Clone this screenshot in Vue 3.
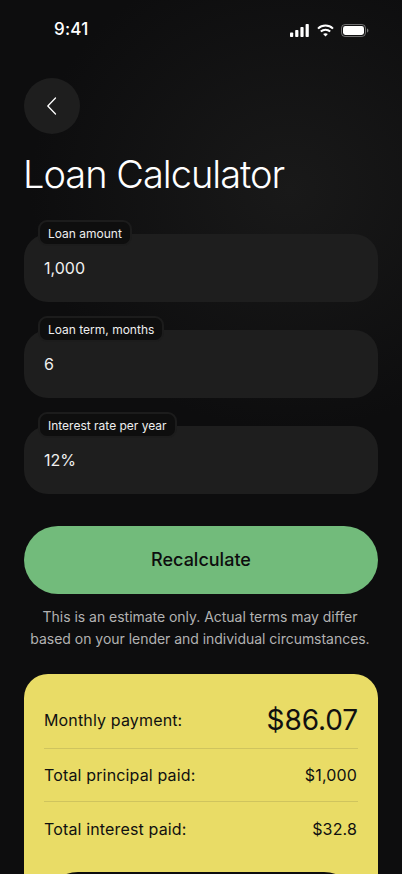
<script setup>
const fields = [
  { label: 'Loan amount', value: '1,000' },
  { label: 'Loan term, months', value: '6' },
  { label: 'Interest rate per year', value: '12%' },
]
</script>

<template>
  <div class="screen">
    <div class="status">
      <span class="time">9:41</span>
      <div class="status-icons">
        <svg width="19" height="13" viewBox="0 0 19 13" fill="#fff">
          <rect x="0" y="8.5" width="3.2" height="4.5" rx="0.8" />
          <rect x="5.2" y="6" width="3.2" height="7" rx="0.8" />
          <rect x="10.4" y="3" width="3.2" height="10" rx="0.8" />
          <rect x="15.6" y="0" width="3.2" height="13" rx="0.8" />
        </svg>
        <svg width="17" height="13" viewBox="0 0 17 13" fill="none" stroke="#fff" stroke-width="2">
          <path d="M1 4.6C5.2 .6 11.8 .6 16 4.6" />
          <path d="M3.8 7.5C6.5 5 10.5 5 13.2 7.5" />
          <path d="M8.5 12.6 6.1 10.1C7.5 9 9.5 9 10.9 10.1Z" fill="#fff" stroke="none" />
        </svg>
        <svg width="28" height="13" viewBox="0 0 28 13" fill="none">
          <rect x="0.5" y="0.5" width="24" height="12" rx="3.6" stroke="#fff" stroke-opacity="0.4" />
          <rect x="2" y="2" width="21" height="9" rx="2.4" fill="#fff" />
          <path d="M26 4.5v4c.8-.3 1.4-1.1 1.4-2s-.6-1.7-1.4-2Z" fill="#fff" fill-opacity="0.45" />
        </svg>
      </div>
    </div>

    <main class="content">
      <button class="back" aria-label="Back">
        <svg width="12" height="20" viewBox="0 0 12 20" fill="none" stroke="#fff" stroke-width="1.3" stroke-linecap="round" stroke-linejoin="round">
          <path d="M9.5 2 1.8 10 9.5 18" />
        </svg>
      </button>

      <h1 class="title">Loan Calculator</h1>

      <div class="fields">
        <div v-for="f in fields" :key="f.label" class="field">
          <span class="tag">{{ f.label }}</span>
          <span class="value">{{ f.value }}</span>
        </div>
      </div>

      <button class="recalc">Recalculate</button>

      <p class="note">This is an estimate only. Actual terms may differ<br />based on your lender and individual circumstances.</p>

      <section class="card">
        <div class="row first">
          <span>Monthly payment:</span>
          <span class="big">$86.07</span>
        </div>
        <div class="row">
          <span>Total principal paid:</span>
          <span>$1,000</span>
        </div>
        <div class="row last">
          <span>Total interest paid:</span>
          <span>$32.8</span>
        </div>
        <div class="dark-btn"></div>
      </section>
    </main>
  </div>
</template>

<style scoped>
.screen {
  width: 402px;
  height: 874px;
  overflow: hidden;
  background: radial-gradient(ellipse 260px 240px at 290px 190px, #191919 0%, #0d0d0e 100%);
  font-family: Inter, "Liberation Sans", sans-serif;
  color: #fff;
}
.status {
  height: 60px;
  box-sizing: border-box;
  padding: 21px 33px 0 54px;
  display: flex;
  justify-content: space-between;
  align-items: flex-start;
}
.time {
  margin-top: -1px;
  font-size: 17px;
  font-weight: 500;
  line-height: 18px;
  letter-spacing: 0.2px;
}
.status-icons {
  display: flex;
  align-items: center;
  gap: 7.5px;
  height: 18px;
}
.content {
  padding: 18px 24px 0;
  display: flex;
  flex-direction: column;
}
.back {
  width: 56px;
  height: 56px;
  border-radius: 50%;
  border: 0;
  padding: 0;
  background: #1e1e1e;
  display: flex;
  align-items: center;
  justify-content: center;
}
.title {
  margin: 17px 0 0 -1px;
  font-size: 38px;
  font-weight: 300;
  line-height: 46px;
  letter-spacing: -1px;
}
.fields {
  margin-top: 37px;
  display: flex;
  flex-direction: column;
  gap: 28px;
}
.field {
  position: relative;
  height: 68px;
  box-sizing: border-box;
  padding: 0 20px;
  border-radius: 24px;
  background: #1e1e1e;
  display: flex;
  align-items: center;
}
.value {
  font-size: 16px;
  line-height: 20px;
  color: #f0f0f0;
}
.tag {
  position: absolute;
  left: 14px;
  top: -14px;
  height: 26px;
  box-sizing: border-box;
  padding: 0 8px;
  border: 2px solid #1c1c1c;
  border-radius: 9px;
  background: #0e0e0e;
  font-size: 12px;
  line-height: 24px;
  color: #efefef;
  white-space: nowrap;
}
.recalc {
  margin-top: 32px;
  height: 68px;
  border: 0;
  padding: 0 0 2px;
  border-radius: 34px;
  background: #72bb7b;
  color: #0d0d0e;
  font-family: inherit;
  font-size: 18px;
  font-weight: 500;
}
.note {
  margin: 12px -1px 0 -3px;
  text-align: center;
  font-size: 14px;
  line-height: 22px;
  letter-spacing: -0.03px;
  color: #b2b2b2;
}
.card {
  margin-top: 24px;
  height: 260px;
  box-sizing: border-box;
  padding: 20px 20px 0;
  border-radius: 24px;
  background: #e9dc66;
  color: #101010;
}
.row {
  display: flex;
  justify-content: space-between;
  align-items: center;
  box-sizing: border-box;
  height: 53px;
  font-size: 16px;
  font-weight: 400;
  letter-spacing: 0.15px;
  border-bottom: 1px solid #cfc45e;
}
.row span:last-child {
  margin-right: 1px;
}
.row.first {
  height: 55px;
  padding-bottom: 2px;
}
.row.first .big {
  margin-right: 0;
}
.row.last {
  border-bottom: 0;
}
.big {
  font-size: 28px;
  font-weight: 400;
  letter-spacing: -0.1px;
}
.dark-btn {
  margin-top: 17px;
  height: 68px;
  border-radius: 34px;
  background: #0d0d0e;
}
</style>
